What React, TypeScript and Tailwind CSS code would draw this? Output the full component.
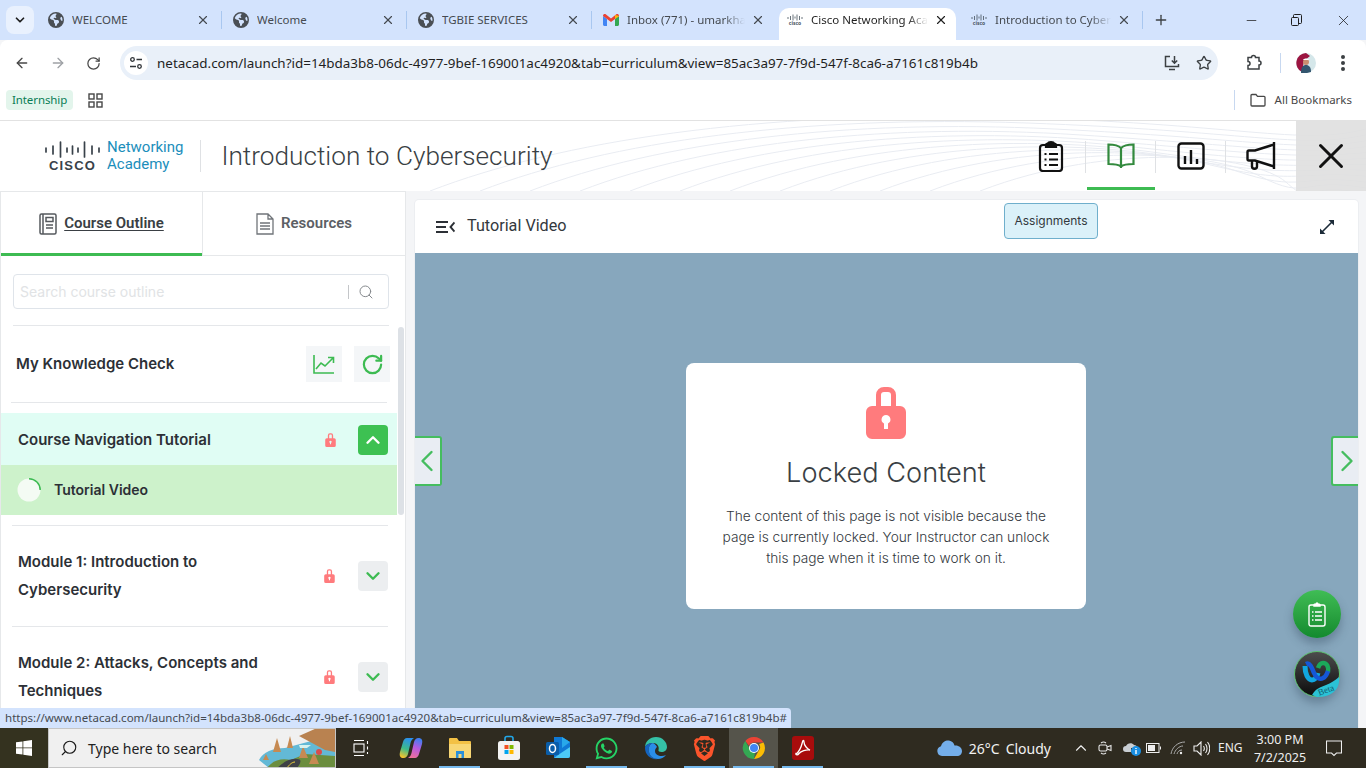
import { ArrowLeft, ArrowRight, ChevronDown, ChevronLeft, ChevronRight, ChevronUp, Minus, Plus, RotateCw, Search, Star, X } from "lucide-react";
import { FaEarthAmericas, FaWhatsapp } from "react-icons/fa6";
import { SiBrave } from "react-icons/si";

const ui = "font-['Noto_Sans',sans-serif]";

type Tab = { title: string; icon: "globe" | "gmail" | "cisco"; width: string; fade?: boolean; active?: boolean; sep?: boolean };

const tabs: Tab[] = [
  { title: "WELCOME", icon: "globe", width: "w-[185px]", sep: true },
  { title: "Welcome", icon: "globe", width: "w-[185px]", sep: true },
  { title: "TGBIE SERVICES", icon: "globe", width: "w-[185px]", sep: true },
  { title: "Inbox (771) - umarkhan@gmail.com", icon: "gmail", width: "w-[185px]", fade: true },
  { title: "Cisco Networking Academy", icon: "cisco", width: "w-[177px]", fade: true, active: true },
  { title: "Introduction to Cybersecurity", icon: "cisco", width: "w-[183px]", fade: true, sep: true },
];

function CiscoMini() {
  return (
    <span className="flex w-[16px] shrink-0 flex-col items-center leading-none text-[#45525c]">
      <svg width="16" height="7" viewBox="0 0 16 7" stroke="currentColor" strokeWidth="0.8">
        <path d="M1 3v2M3.500 2v4M6 .5v6M8 2.500v2M10 .5v6M12.500 2v4M15 3v2" />
      </svg>
      <span className="text-[5px] font-bold">cisco</span>
    </span>
  );
}

function Gmail() {
  return (
    <svg className="shrink-0" width="16" height="12" viewBox="0 0 16 12">
      <path d="M0 2v8.500C0 11.300.7 12 1.500 12H4V5z" fill="#4285f4" />
      <path d="M16 2v8.500c0 .8-.7 1.500-1.500 1.500H12V5z" fill="#34a853" />
      <path d="M0 2c0-2 2-2.500 3-1.500L8 4.500l5-4c1-1 3-.5 3 1.500l-4 3-4 3-4-3z" fill="#ea4335" />
      <path d="M12 .9 16 2l-4 3z" fill="#fbbc04" />
    </svg>
  );
}

function BrowserTab({ tab }: { tab: Tab }) {
  return (
    <div className={`relative flex h-[32px] shrink-0 items-center pb-[8px] ${tab.width} ${tab.active ? "ml-[2px] mr-[4px] rounded-t-[10px] bg-white pl-[8px] pr-[8px]" : "pl-[11px] pr-[12px]"}`}>
      {tab.icon === "globe" && <FaEarthAmericas className="h-[16px] w-[16px] shrink-0 text-[#4a4f55]" />}
      {tab.icon === "gmail" && <Gmail />}
      {tab.icon === "cisco" && <CiscoMini />}
      <span className={`ml-[8px] min-w-0 flex-1 overflow-hidden whitespace-nowrap text-[11.500px] ${tab.active ? "text-[#1f1f1f]" : "text-[#454a50]"} ${tab.fade ? "[mask-image:linear-gradient(to_right,black_82%,transparent)]" : ""}`}>{tab.title}</span>
      <X className={`ml-[6px] h-[14px] w-[14px] shrink-0 ${tab.active ? "text-[#1f1f1f]" : "text-[#454a50]"}`} strokeWidth={2} />
      {tab.sep && <span className="absolute right-0 top-[3px] h-[18px] w-[1.500px] bg-[#a8c7f0]" />}
    </div>
  );
}

function ChromeFrame() {
  return (
    <div className={`${ui} shrink-0`}>
      <div className="flex h-[40px] items-end bg-[#d3e3fd]">
        <div className="mb-[4px] ml-[6px] mr-[3px] mt-[4px] flex h-[28px] w-[28px] items-center justify-center self-center rounded-[8px] bg-[#e9f1fe]">
          <ChevronDown className="h-[14px] w-[14px] text-[#1f1f1f]" strokeWidth={3} />
        </div>
        {tabs.map((t) => <BrowserTab key={t.title} tab={t} />)}
        <div className="flex h-[40px] w-[36px] items-center justify-center">
          <Plus className="h-[16px] w-[16px] text-[#3c4043]" strokeWidth={2} />
        </div>
        <div className="ml-auto flex h-[40px] items-center text-[#1f1f1f]">
          <span className="flex w-[46px] justify-center"><Minus className="h-[15px] w-[15px]" strokeWidth={1.2} /></span>
          <span className="flex w-[46px] justify-center pr-[2px]">
            <svg width="12" height="12" viewBox="0 0 12 12" fill="none" stroke="currentColor"><rect x="1.500" y="3.500" width="7" height="8" rx="1" /><path d="M3.500 3.500V1.500a1 1 0 0 1 1-1h6a1 1 0 0 1 1 1v7a1 1 0 0 1-1 1h-2" /></svg>
          </span>
          <span className="flex w-[46px] justify-center"><X className="h-[17px] w-[17px]" strokeWidth={1.1} /></span>
        </div>
      </div>

      <div className="flex h-[46px] items-center rounded-t-[8px] bg-white">
        <ArrowLeft className="ml-[14px] h-[16px] w-[16px] text-[#474747]" strokeWidth={2} />
        <ArrowRight className="ml-[20px] h-[16px] w-[16px] text-[#9ea1a5]" strokeWidth={2} />
        <RotateCw className="ml-[20px] h-[15px] w-[15px] text-[#474747]" strokeWidth={2} />
        <div className="ml-[19px] flex h-[34px] w-[1098px] items-center rounded-full bg-[#e9f0f9] pl-[4px]">
          <span className="flex h-[24px] w-[24px] items-center justify-center rounded-full bg-white">
            <svg width="14" height="14" viewBox="0 0 14 14" fill="none" stroke="#303438" strokeWidth="1.300"><circle cx="3.500" cy="3.500" r="1.800" /><path d="M7.500 3.500H13M1 10.500h6" /><circle cx="10.500" cy="10.500" r="1.800" /></svg>
          </span>
          <span className="ml-[9px] whitespace-nowrap text-[13.450px] text-[#1f1f1f]">netacad.com/launch?id=14bda3b8-06dc-4977-9bef-169001ac4920&amp;tab=curriculum&amp;view=85ac3a97-7f9d-547f-8ca6-a7161c819b4b</span>
          <span className="ml-auto flex items-center gap-[15px] pr-[6px]">
            <svg width="18" height="18" viewBox="0 0 18 18" fill="none" stroke="#3c4043" strokeWidth="1.500"><path d="M7 2.500H2.500v10h13V10M6 15.500h6M11.500 2v7M8.800 6.500l2.700 2.700 2.700-2.700" /></svg>
            <Star className="h-[16px] w-[16px] text-[#3c4043]" strokeWidth={2} />
          </span>
        </div>
        <svg className="ml-[27px]" width="18" height="18" viewBox="0 0 18 18" fill="none" stroke="#3c4043" strokeWidth="1.500"><path d="M3 3.500h3.500a2 2 0 0 1 4 0H14v3.500a2 2 0 0 1 0 4V15H3v-3.500a2 2 0 0 0 0-4z" /></svg>
        <span className="ml-[17px] h-[20px] w-[1px] bg-[#c7d8f0]" />
        <svg className="ml-[15px]" width="20" height="20" viewBox="0 0 20 20">
          <circle cx="10" cy="10" r="10" fill="#d5e7ea" />
          <path d="M10 0a10 10 0 0 0-4 19L8 8l6-5z" fill="#9c1541" />
          <path d="M5 20c0-6 2-8 5-8s5 2 5 7l-4 1z" fill="#33566f" />
          <circle cx="10" cy="9" r="3" fill="#c98e70" />
          <path d="M7 7c1-2 5-2 6 0z" fill="#fff" />
        </svg>
        <span className="ml-[25px] flex flex-col gap-[2.500px]">
          <span className="h-[3.500px] w-[3.500px] rounded-full bg-[#3c4043]" />
          <span className="h-[3.500px] w-[3.500px] rounded-full bg-[#3c4043]" />
          <span className="h-[3.500px] w-[3.500px] rounded-full bg-[#3c4043]" />
        </span>
      </div>

      <div className="flex h-[34px] items-center bg-white pb-[6px] pl-[6px]">
        <span className="flex h-[20px] items-center rounded-[4px] bg-[#e3f5ec] px-[6px] text-[11.500px] tracking-[-0.1px] text-[#0a7d55]">Internship</span>
        <svg className="ml-[15px]" width="15" height="15" viewBox="0 0 15 15" fill="none" stroke="#474747" strokeWidth="1.400"><rect x="1" y="1" width="5" height="5" /><rect x="9" y="1" width="5" height="5" /><rect x="1" y="9" width="5" height="5" /><rect x="9" y="9" width="5" height="5" /></svg>
        <span className="ml-auto h-[20px] w-[1px] bg-[#c7d8f0]" />
        <svg className="ml-[15px]" width="16" height="14" viewBox="0 0 16 14" fill="none" stroke="#474747" strokeWidth="1.300"><path d="M1 2.500a1 1 0 0 1 1-1h4l1.500 1.800H14a1 1 0 0 1 1 1V12a1 1 0 0 1-1 1H2a1 1 0 0 1-1-1z" /></svg>
        <span className="ml-[9px] mr-[14px] text-[11.500px] text-[#474747]">All Bookmarks</span>
      </div>
    </div>
  );
}

function HeaderWaves() {
  const lines = [0, 1, 2, 3, 4, 5, 6, 7, 8, 9, 10, 11];
  return (
    <svg className="absolute inset-0 h-full w-full" viewBox="0 0 1366 71" preserveAspectRatio="none" fill="none" stroke="#e9ecf2">
      {lines.map((i) => (
        <path key={i} d={`M${430 + i * 50} 71C${560 + i * 50} 20 ${760 + i * 45} ${-10 + i * 4} ${1000 + i * 26} ${i * 6 - 4}S1300 ${26 + i * 3} 1366 ${8 + i * 6}`} />
      ))}
    </svg>
  );
}

function NavIcon({ children, active, last }: { children: React.ReactNode; active?: boolean; last?: boolean }) {
  return (
    <div className="relative flex h-full w-[70px] items-center justify-center">
      {children}
      {!last && <span className="absolute right-0 top-[20px] h-[32px] w-[1px] bg-[#dfe1e4]" />}
      {active && <span className="absolute bottom-[1px] left-[1px] right-[1px] h-[3px] bg-[#3dbb52]" />}
    </div>
  );
}

function SiteHeader() {
  return (
    <header className="relative flex h-[71px] shrink-0 items-center border-t border-[#e2e2e2] bg-white font-['Roboto',sans-serif]">
      <HeaderWaves />
      <div className="relative ml-[45px] flex w-[55px] flex-col items-center">
        <svg width="55" height="17" viewBox="0 0 55 17" stroke="#39424a" strokeWidth="1.700" strokeLinecap="round">
          <path d="M1 7v4M8 5v8M15.500 1v15M22 7v4M27.500 5v8M33 7v4M39.500 1v15M47 5v8M54 7v4" />
        </svg>
        <span className="mt-[1px] font-['Liberation_Sans',sans-serif] text-[13px] font-bold leading-[13px] tracking-[1.200px] text-[#39424a]">CISCO</span>
      </div>
      <div className="relative ml-[7px] flex flex-col text-[15px] leading-[17px] text-[#1b8ebb]">
        <span>Networking</span>
        <span>Academy</span>
      </div>
      <span className="relative ml-[17px] h-[32px] w-[1px] bg-[#dfe1e4]" />
      <h1 className="relative ml-[20px] pt-[2px] text-[26.200px] font-light text-[#3a3f44]">Introduction to Cybersecurity</h1>
      <div className="relative ml-auto flex h-full">
        <NavIcon>
          <svg width="26" height="32" viewBox="0 0 26 32" fill="none" stroke="#111" strokeWidth="2.200">
            <rect x="2" y="5" width="22" height="26" rx="3" />
            <path d="M8 5c0-1 1-1.500 2-1.500.5-2 5.500-2 6 0 1 0 2 .5 2 1.500v2H8z" fill="#111" />
            <path d="M6.500 14h2M11 14h9M6.500 19.500h2M11 19.500h9M6.500 25h2M11 25h9" />
          </svg>
        </NavIcon>
        <NavIcon active>
          <svg width="28" height="26" viewBox="0 0 28 26" fill="none" stroke="#338a3e" strokeWidth="2.200">
            <path d="M14 5C11 2 7 1.500 1.500 1.500V21c5 0 9.500 0 12.500 2.500C17 21 21.500 21 26.500 21V1.500C21 1.500 17 2 14 5zM14 5v20" />
          </svg>
        </NavIcon>
        <NavIcon>
          <svg width="28" height="28" viewBox="0 0 28 28" fill="none" stroke="#111" strokeWidth="2.400">
            <rect x="1.500" y="1.500" width="25" height="25" rx="3" />
            <path d="M8 14v8M14 8v14M20 17v5" />
          </svg>
        </NavIcon>
        <NavIcon last>
          <svg width="30" height="30" viewBox="0 0 30 30" fill="none" stroke="#111" strokeWidth="2.400">
            <path d="M28 1v27M28 3.500 9 9.500H3A1.500 1.500 0 0 0 1.500 11v7A1.500 1.500 0 0 0 3 19.500h6l19 6M6 19.500v6c0 3 5 3 5 0v-5" />
          </svg>
        </NavIcon>
        <div className="relative flex h-full w-[70px] items-center justify-center bg-[#dfdfdf]/90">
          <X className="h-[42px] w-[42px] text-[#111]" strokeWidth={1.700} />
        </div>
      </div>
    </header>
  );
}

function Lock({ className }: { className: string }) {
  return (
    <svg className={className} viewBox="0 0 40 53">
      <path fillRule="evenodd" fill="#ff7b7d" d="M10 20V9a8 8 0 0 1 8-8h4a8 8 0 0 1 8 8v11h4a6 6 0 0 1 6 6v21a6 6 0 0 1-6 6H6a6 6 0 0 1-6-6V26a6 6 0 0 1 6-6zM15 20h10V9a3 3 0 0 0-3-3h-4a3 3 0 0 0-3 3zM20 29a4.500 4.500 0 0 0-2 8.500V43h4v-5.500A4.500 4.500 0 0 0 20 29z" />
    </svg>
  );
}

function ModuleRow({ title }: { title: React.ReactNode }) {
  return (
    <div className="mx-[11px] flex h-[101px] w-[376px] items-center border-t border-[#e5e7ea] pl-[6px]">
      <p className="w-[301px] pr-[40px] text-[15px] font-semibold leading-[28px] text-[#2c3036]">{title}</p>
      <Lock className="ml-[7px] h-[14px] w-[11px]" />
      <span className="ml-[23px] flex h-[30px] w-[30px] items-center justify-center rounded-[4px] bg-[#eceef0]">
        <ChevronDown className="h-[22px] w-[22px] text-[#3dbb52]" strokeWidth={2.600} />
      </span>
    </div>
  );
}

function Sidebar() {
  return (
    <aside className="flex w-[406px] shrink-0 flex-col overflow-hidden border-l border-r border-[#e6e8ea] bg-white font-['Inter',sans-serif]">
      <div className="flex h-[65px] shrink-0 border-t border-[#e6e8ea] font-['Roboto',sans-serif] text-[15px] font-semibold">
        <div className="flex w-[201px] items-center justify-center gap-[7px] border-b-[3px] border-[#3dbb52] pt-[2px] text-[#3a3f44]">
          <svg width="18" height="22" viewBox="0 0 18 22" fill="none" stroke="#55595e" strokeWidth="1.500"><rect x="1" y="1" width="16" height="20" rx="1.500" /><path d="M4 1v20" /><rect x="7" y="4.500" width="7" height="4" /><path d="M7 12h7M7 15h7" /></svg>
          <span className="underline underline-offset-2">Course Outline</span>
        </div>
        <div className="flex flex-1 items-center justify-center gap-[7px] border-b border-l border-[#e6e8ea] text-[#5c6065]">
          <svg width="18" height="22" viewBox="0 0 18 22" fill="none" stroke="#707479" strokeWidth="1.300"><path d="M1 1h11l5 5v15H1zM12 1v5h5M4 10h10M4 13h10M4 16h10" /></svg>
          <span>Resources</span>
        </div>
      </div>

      <div className="relative min-h-0 flex-1 overflow-hidden">
        <div className="mx-[12px] mt-[18px] flex h-[35px] w-[376px] items-center rounded-[4px] border border-[#dfe4ea] pl-[6px] pr-[14px]">
          <span className="flex-1 text-[14px] text-[#e1e3e5]">Search course outline</span>
          <span className="mr-[9px] h-[14px] w-[1px] bg-[#c4c6c9]" />
          <Search className="h-[16px] w-[16px] text-[#85898d]" strokeWidth={1.500} />
        </div>
        <div className="ml-[12px] mt-[16px] flex h-[77px] w-[376px] items-center border-t border-[#e5e7ea] pl-[3px]">
          <span className="flex-1 text-[15px] font-semibold text-[#2c3036]">My Knowledge Check</span>
          <span className="flex h-[36px] w-[36px] items-center justify-center bg-[#f4f6f8]">
            <svg width="22" height="20" viewBox="0 0 22 20" fill="none" stroke="#3dbb52" strokeWidth="1.600"><path d="M1 1v18h20M3 15l5-6 4 3 8-8M15 3.500h5.500V9" /></svg>
          </span>
          <span className="ml-[12px] mr-[-1px] flex h-[36px] w-[36px] items-center justify-center bg-[#f4f6f8]">
            <RotateCw className="h-[23px] w-[23px] text-[#3dbb52]" strokeWidth={2.300} />
          </span>
        </div>
        <div className="ml-[10px] w-[376px] border-t border-[#e5e7ea]" />

        <div className="mt-[10px] w-[396px]">
          <div className="flex h-[52px] items-center bg-[#e0fdf4] pl-[17px] pt-[2px]">
            <span className="w-[300px] text-[15px] font-semibold text-[#2c3036]">Course Navigation Tutorial</span>
            <Lock className="ml-[7px] h-[14px] w-[11px]" />
            <span className="ml-[22px] flex h-[30px] w-[30px] items-center justify-center rounded-[4px] bg-[#3dc152]">
              <ChevronUp className="h-[22px] w-[22px] text-white" strokeWidth={2.600} />
            </span>
          </div>
          <div className="flex h-[50px] items-center bg-[#cdf2cb] pl-[16px]">
            <svg width="24" height="24" viewBox="0 0 24 24" fill="none"><circle cx="12" cy="12" r="11.500" fill="#f4fbf4" /><path d="M12 .8A11.200 11.200 0 0 1 23.200 12" stroke="#3dbb52" strokeWidth="1.500" /></svg>
            <span className="mb-[2px] ml-[13px] text-[14px] font-semibold text-[#2c3036]">Tutorial Video</span>
          </div>
        </div>

        <div className="mt-[10px]">
          <ModuleRow title={<>Module 1: Introduction to Cybersecurity</>} />
          <ModuleRow title={<>Module 2: Attacks, Concepts and Techniques</>} />
        </div>
        <span className="absolute left-[397px] top-[71px] h-[188px] w-[6px] rounded-full bg-[#dde1e6]" />
      </div>
    </aside>
  );
}

function ContentPanel() {
  return (
    <section className="ml-[9px] mt-[9px] flex h-[528px] w-[943px] shrink-0 flex-col overflow-hidden rounded-t-[4px] bg-white font-['Inter',sans-serif] shadow-[0_0_0_1px_#eceef1]">
      <div className="flex h-[53px] shrink-0 items-center pl-[21px] pr-[22px]">
        <svg width="19" height="14" viewBox="0 0 19 14" fill="none" stroke="#2c3036" strokeWidth="1.900"><path d="M0 2h12M0 7h10M0 12h12M18.500 2.500 14.500 7l4 4.500" /></svg>
        <span className="ml-[12px] font-['Roboto',sans-serif] text-[16.200px] text-[#33383d]">Tutorial Video</span>
        <svg className="ml-auto" width="18" height="18" viewBox="0 0 18 18" fill="none" stroke="#1b2a38" strokeWidth="1.600"><path d="M4 14 14 4" /><path d="M10.500 2H16v5.500z" fill="#1b2a38" stroke="none" /><path d="M7.500 16H2v-5.500z" fill="#1b2a38" stroke="none" /></svg>
      </div>
      <div className="relative flex min-h-0 flex-1 bg-[#87a7bd] pr-[1px] pt-[110px]">
        <div className="mx-auto flex h-[246px] w-[400px] flex-col items-center rounded-[8px] bg-white pt-[23px]">
          <Lock className="h-[53px] w-[40px]" />
          <h2 className="mt-[16px] text-[27.200px] font-light leading-[36px] text-[#3a3f44]">Locked Content</h2>
          <p className="mt-[15px] w-[340px] text-center text-[13.700px] font-light leading-[21px] text-[#33383d]">
            The content of this page is not visible because the page is currently locked. Your Instructor can unlock this page when it is time to work on it.
          </p>
        </div>
        <button type="button" className="absolute left-0 top-[183px] flex h-[50px] w-[27px] items-center justify-center rounded-r-[3px] border-2 border-l-0 border-[#45bd5f] bg-[#e9edf3] pr-[2px]">
          <ChevronLeft className="h-[36px] w-[36px] shrink-0 text-[#45bd5f]" strokeWidth={1.600} />
        </button>
        <button type="button" className="absolute right-0 top-[183px] flex h-[50px] w-[27px] items-center justify-center rounded-l-[3px] border-2 border-r-0 border-[#45bd5f] bg-[#e9edf3] pl-[2px]">
          <ChevronRight className="h-[36px] w-[36px] shrink-0 text-[#45bd5f]" strokeWidth={1.600} />
        </button>
        <span className="absolute left-[878px] top-[337px] flex h-[48px] w-[48px] items-center justify-center rounded-full bg-gradient-to-b from-[#3fbd55] to-[#128a2e] shadow-[0_6px_10px_rgba(40,60,80,0.35)]">
          <svg width="18" height="25" viewBox="0 0 18 25" fill="none" stroke="#fff" strokeWidth="1.400">
            <rect x="1" y="3" width="16" height="21" rx="2" />
            <path d="M6 3c0-1 1-1 2-1 .3-1.300 1.700-1.300 2 0 1 0 2 0 2 1v1H6z" fill="#fff" />
            <path d="M4 10h1.500M7 10h7M4 14h1.500M7 14h7M4 18h1.500M7 18h7" />
          </svg>
        </span>
        <span className="absolute left-[879px] top-[398px] h-[46px] w-[46px] rounded-full shadow-[0_6px_10px_rgba(40,60,80,0.35)]">
          <svg width="46" height="46" viewBox="0 0 46 46">
            <defs>
              <linearGradient id="webexBg" x1="0" y1="0" x2="0" y2="1"><stop offset="0" stopColor="#4d4d4d" /><stop offset="1" stopColor="#0c0c0c" /></linearGradient>
            </defs>
            <circle cx="23" cy="23" r="22.500" fill="url(#webexBg)" stroke="#5cc26f" />
            <path d="M11 15c0 8 3 14 7 14 3 0 5-3 6-7" fill="none" stroke="#11a7e0" strokeWidth="5" />
            <path d="M24 17c1-3 3-5 5-5 4 0 6 4 5 9" fill="none" stroke="#1ba85a" strokeWidth="4.500" />
            <path d="M12 13c4-2 6 4 8 9 2 5 6 7 9 5 3-1 4-4 5-7" fill="none" stroke="#1557d8" strokeWidth="4.500" />
            <path d="M18 44c4-7 9-8 14-10 5-2 8-4 13-8 1 6-1 20-22 20z" fill="#2bc2d6" />
          </svg>
          <span className="absolute left-[24px] top-[35px] rotate-[-20deg] font-['Liberation_Serif',serif] text-[9px] leading-none text-[#14606f]">Beta</span>
        </span>
      </div>
    </section>
  );
}

function ChromeLogo() {
  return (
    <svg width="24" height="24" viewBox="0 0 24 24">
      <path d="M12 1a11 11 0 0 1 9.500 5.500H12a5.500 5.500 0 0 0-5 3.200L3.300 5A11 11 0 0 1 12 1z" fill="#ea4335" />
      <path d="M21.500 6.500A11 11 0 0 1 12 23l4.700-8.200A5.500 5.500 0 0 0 17 8z" fill="#fbbc04" />
      <path d="M12 23A11 11 0 0 1 3.300 5L8 13.500a5.500 5.500 0 0 0 5 3l-1 6.500z" fill="#34a853" />
      <circle cx="12" cy="12" r="5" fill="#fff" />
      <circle cx="12" cy="12" r="4" fill="#4285f4" />
    </svg>
  );
}

function Scenery() {
  return (
    <svg width="76" height="40" viewBox="0 0 76 40" className="shrink-0">
      <path d="M0 32c4-8 14-12 26-12l30-8 20 2v26H10z" fill="#63b9d6" />
      <path d="M40 8 58 0h18v24l-10-2z" fill="#b98250" />
      <path d="M8 40c6-8 14-10 24-8l14-6 30 2v12z" fill="#6b8d3e" />
      <path d="M18 40c6-5 12-10 20-9 6 0 3 5 0 9z" fill="#3f4146" />
      <path d="M28 40c2-3 5-6 8-6" fill="none" stroke="#f2d13c" />
      <path d="M14 24l4-14 4 14zM28 20l3-12 3 12zM40 30l4-12 5 12zM4 32l3-6 3 6zM50 36l5-12 5 12z" fill="#c68a52" />
      <circle cx="60" cy="24" r="3" fill="#d84d4d" />
      <path d="M40 17h12l-4 3h-7z" fill="#d8f3ef" />
    </svg>
  );
}

function Copilot() {
  return (
    <svg width="24" height="24" viewBox="0 0 24 24">
      <defs>
        <linearGradient id="copilotLeft" x1="0.600" y1="0" x2="0.300" y2="1"><stop offset="0" stopColor="#2a8ff0" /><stop offset="0.550" stopColor="#3dbb8a" /><stop offset="1" stopColor="#f6c32c" /></linearGradient>
        <linearGradient id="copilotRight" x1="0.600" y1="0" x2="0.300" y2="1"><stop offset="0" stopColor="#3f7ff0" /><stop offset="0.450" stopColor="#b55ae0" /><stop offset="1" stopColor="#f0709a" /></linearGradient>
      </defs>
      <path d="M8 2h7c-2 1-3 3-3.500 5L9 18c-.5 2-2 4-4.500 4C1.500 22 0 20 1 16L4 6c.5-2 2-4 4-4z" fill="url(#copilotLeft)" />
      <path d="M16 22H9c2-1 3-3 3.500-5L15 6c.5-2 2-4 4.500-4 3 0 4.500 2 3.500 6l-3 10c-.5 2-2 4-4 4z" fill="url(#copilotRight)" />
    </svg>
  );
}

function TaskIcon({ children, open, active }: { children: React.ReactNode; open?: boolean; active?: boolean }) {
  return (
    <div className={`relative flex h-full w-[49px] items-center justify-center ${active ? "bg-[#55544b]" : ""}`}>
      {children}
      {open && <span className="absolute bottom-0 left-[4px] right-[4px] h-[2px] bg-[#76b9ed]" />}
    </div>
  );
}

function Taskbar() {
  return (
    <footer className={`${ui} flex h-[40px] shrink-0 items-center bg-[#2f2b20] text-white`}>
      <div className="flex h-full w-[48px] items-center justify-center bg-[#34321f]">
        <svg width="16" height="16" viewBox="0 0 16 16" fill="#fff"><path d="M0 2.300 6.500 1.400V7.500H0zM7.300 1.300 16 0v7.500H7.300zM0 8.300h6.500v6.300L0 13.700zM7.300 8.300H16V16l-8.700-1.300z" /></svg>
      </div>
      <div className="flex h-full w-[288px] items-center overflow-hidden border border-[#c5c5c5] bg-[#f0f0f0] pl-[11px]">
        <Search className="h-[18px] w-[18px] scale-x-[-1] text-[#1a1a1a]" strokeWidth={1.500} />
        <span className="ml-[10px] flex-1 whitespace-nowrap text-[14px] text-[#222]">Type here to search</span>
        <Scenery />
      </div>
      <div className="flex h-full w-[50px] items-center justify-center">
        <svg width="16" height="16" viewBox="0 0 16 16" fill="none" stroke="#fff" strokeWidth="1.100"><path d="M1 .5h10M1 15.500h10" /><rect x="1" y="4" width="10" height="8" /><path d="M14.500 1v3M14.500 6.500v3M14.500 12v2" /></svg>
      </div>
      <TaskIcon>
        <Copilot />
      </TaskIcon>
      <TaskIcon open>
        <svg width="24" height="22" viewBox="0 0 24 22">
          <path d="M1 2a1 1 0 0 1 1-1h7l2 3h11a1 1 0 0 1 1 1v15a1 1 0 0 1-1 1H2a1 1 0 0 1-1-1z" fill="#f3c145" />
          <path d="M1 7h22v13a1 1 0 0 1-1 1H2a1 1 0 0 1-1-1z" fill="#f8d775" />
          <path d="M8 21v-7h8v7h-2.500v-4h-3v4z" fill="#2b90d9" />
        </svg>
      </TaskIcon>
      <TaskIcon>
        <svg width="24" height="26" viewBox="0 0 24 26">
          <path d="M8 6V3.500a2 2 0 0 1 2-2h4a2 2 0 0 1 2 2V6" fill="none" stroke="#22a7e8" strokeWidth="1.600" />
          <rect x="1" y="6" width="22" height="19" rx="2.500" fill="#f3f3f3" />
          <rect x="7.500" y="10" width="4" height="4" fill="#f25022" />
          <rect x="12.500" y="10" width="4" height="4" fill="#7fba00" />
          <rect x="7.500" y="15" width="4" height="4" fill="#00a4ef" />
          <rect x="12.500" y="15" width="4" height="4" fill="#ffb900" />
        </svg>
      </TaskIcon>
      <TaskIcon>
        <svg width="24" height="24" viewBox="0 0 24 24">
          <path d="M8 1h8l8 5v14a2 2 0 0 1-2 2H8z" fill="#0f78d4" />
          <path d="M16 1l8 5-8 6z" fill="#28a8ea" />
          <path d="M8 22h14a2 2 0 0 0 2-2v-9l-9 6z" fill="#4cc9f5" />
          <rect x="0" y="6" width="13" height="13" rx="1.500" fill="#0a5da8" />
          <ellipse cx="6.500" cy="12.500" rx="3" ry="4" fill="none" stroke="#fff" strokeWidth="1.500" />
        </svg>
      </TaskIcon>
      <TaskIcon open>
        <FaWhatsapp className="h-[25px] w-[25px] text-[#25d366]" />
      </TaskIcon>
      <TaskIcon>
        <svg width="24" height="24" viewBox="0 0 24 24">
          <path d="M1 12C1 5 6 1 12 1c6.500 0 11 5 11 10 0 3-2.500 5-5.500 5-2 0-3.500-1-3-2 1-3-1-7-5-7-4.500 0-8.500 2-8.500 5z" fill="#35c1a6" />
          <path d="M1 12c0-3 4-5 8-5-3 1-5 4-4 9 .8 4 4 7 9 7C7 24 1 19 1 12z" fill="#1464c0" />
          <path d="M9 7c-3 1-5 4-4 9 .8 4 4 7 9 7 3 0 6-1.500 8-4-4 2-11 1-11-4 0-2 1-3 2-4-1-2-2-3-4-4z" fill="#2a8ee8" />
        </svg>
      </TaskIcon>
      <TaskIcon open>
        <SiBrave className="h-[25px] w-[25px] text-[#fb542b]" />
      </TaskIcon>
      <TaskIcon open active>
        <ChromeLogo />
      </TaskIcon>
      <TaskIcon open>
        <svg width="22" height="24" viewBox="0 0 22 24">
          <rect x="0" y="0" width="22" height="24" rx="3" fill="#a80c0c" />
          <path d="M4 18c3-2 5-6 6.500-12 .3-2 1.500-2 1.500 0 0 3 3 7 6 8-4-.5-9 1-11 3.500-1.500 2-3.500 1.500-3-.5z" fill="none" stroke="#fff" strokeWidth="1.300" />
        </svg>
      </TaskIcon>

      <div className="ml-auto flex h-full items-center">
        <svg width="25" height="16" viewBox="0 0 25 16"><path d="M5 16a5 5 0 0 1-1-9.800C5 2 9 0 12 .5c3 .5 5 2.500 5.500 5 4-.5 7.500 2 7.500 5.500 0 3-2 5-5 5z" fill="#74aeea" /></svg>
        <span className="ml-[7px] text-[14px] text-[#f2f2f2]">26°C</span>
        <span className="ml-[6px] text-[14px] text-[#f2f2f2]">Cloudy</span>
        <span className="ml-[21px] flex h-full w-[14px] items-center"><ChevronUp className="h-[18px] w-[18px] shrink-0 text-[#eee]" strokeWidth={1.500} /></span>
        <svg className="ml-[12px]" width="14" height="16" viewBox="0 0 14 16" fill="none" stroke="#e8e8e8" strokeWidth="1.100"><path d="M3 3a4 4 0 0 1 5 0M3 13a4 4 0 0 0 5 0" /><rect x="1" y="5" width="8" height="6" rx="1.500" /><path d="M9 7l4-1.500v5L9 9" /></svg>
        <svg className="ml-[11px]" width="19" height="16" viewBox="0 0 19 16"><path d="M3 12a3 3 0 0 1 0-6c1-3 6-4 8-1 2 0 3 1 3 3H8v4z" fill="#c9ced3" /><circle cx="13" cy="11" r="5" fill="#1a8fe3" /><path d="M13 10v4M13 8v1" stroke="#fff" strokeWidth="1.400" /></svg>
        <svg className="ml-[4px]" width="15" height="10" viewBox="0 0 15 10" fill="none" stroke="#eee"><rect x=".5" y=".5" width="12.500" height="9" /><rect x="2" y="2" width="7" height="6" fill="#eee" stroke="none" /><path d="M14.500 3.500v3" /></svg>
        <svg className="ml-[9px]" width="16" height="14" viewBox="0 0 16 14" fill="none" stroke="#aaa"><path d="M1 13C2 6 8 1 15 1M4 13c1-4 5-8 9-8M7 13c.5-2 2-4 5-4" /><circle cx="11" cy="12" r="1.200" fill="#eee" stroke="none" /></svg>
        <svg className="ml-[7px]" width="17" height="15" viewBox="0 0 17 15" fill="none" stroke="#eee" strokeWidth="1.100"><path d="M1 5h3l4-4v13l-4-4H1zM10.500 5c1 1.500 1 3.500 0 5M12.500 3c2 2.500 2 6.500 0 9M14.500 1c3 3.500 3 9.500 0 13" /></svg>
        <span className="ml-[8px] w-[25px] text-[12px] text-[#eee]">ENG</span>
        <div className="ml-[6px] flex w-[62px] flex-col items-center pt-[2px] text-[12.500px] leading-[18px] text-[#eee]">
          <span>3:00 PM</span>
          <span>7/2/2025</span>
        </div>
        <svg className="ml-[15px] mr-[24px]" width="16" height="17" viewBox="0 0 16 17" fill="none" stroke="#eee" strokeWidth="1.100"><path d="M.5 1h15v12h-5L8 15.500 5.500 13h-5z" /></svg>
      </div>
    </footer>
  );
}

export default function App() {
  return (
    <div className="relative flex h-[768px] w-[1366px] flex-col overflow-hidden bg-[#f4f5f7]">
      <ChromeFrame />
      <SiteHeader />
      <main className="flex min-h-0 flex-1 bg-[#f4f5f7]">
        <Sidebar />
        <ContentPanel />
      </main>
      <Taskbar />

      <div className="absolute left-[1004px] top-[203px] flex h-[36px] w-[94px] items-center justify-center rounded-[4px] border border-[#6fafcc] bg-[#dbf1f9] font-['Inter',sans-serif] text-[12px] text-[#33383d]">Assignments</div>
      <div className={`${ui} absolute bottom-[40px] left-0 flex h-[20px] w-[791px] items-center whitespace-nowrap rounded-tr-[4px] bg-[#d3e3fd] pl-[5px] text-[11.500px] tracking-[0.02px] text-[#454a50]`}>
        https://www.netacad.com/launch?id=14bda3b8-06dc-4977-9bef-169001ac4920&amp;tab=curriculum&amp;view=85ac3a97-7f9d-547f-8ca6-a7161c819b4b#
      </div>
    </div>
  );
}
